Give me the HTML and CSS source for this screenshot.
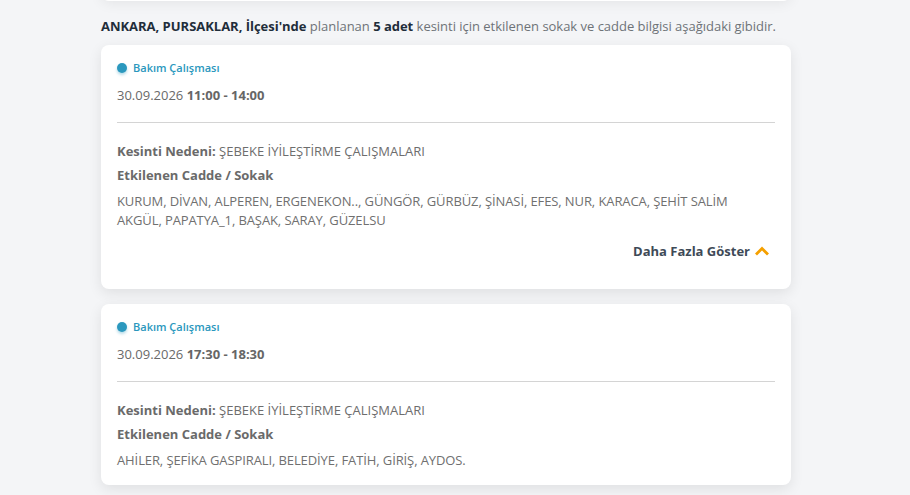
FILE: index.html
```html
<!DOCTYPE html>
<html lang="tr">
<head>
<meta charset="utf-8">
<link rel="stylesheet" href="styles.css">
</head>
<body>
<div class="page">
  <div class="prev-card"></div>
  <p class="summary"><b>ANKARA, PURSAKLAR, İlçesi'nde</b> planlanan <b>5 adet</b> kesinti için etkilenen sokak ve cadde bilgisi aşağıdaki gibidir.</p>

  <div class="card">
    <div class="tag"><span class="dot"></span>Bakım Çalışması</div>
    <div class="date">30.09.2026 <b>11:00 - 14:00</b></div>
    <hr class="divider">
    <div class="row"><b>Kesinti Nedeni:</b> ŞEBEKE İYİLEŞTİRME ÇALIŞMALARI</div>
    <div class="row"><b>Etkilenen Cadde / Sokak</b></div>
    <div class="streets">KURUM, DİVAN, ALPEREN, ERGENEKON.., GÜNGÖR, GÜRBÜZ, ŞİNASİ, EFES, NUR, KARACA, ŞEHİT SALİM AKGÜL, PAPATYA_1, BAŞAK, SARAY, GÜZELSU</div>
    <div class="more">Daha Fazla Göster
      <svg class="chev" width="16" height="10" viewBox="0 0 16 10"><path d="M2 8.5 L8 2.5 L14 8.5" fill="none" stroke="#f5a000" stroke-width="2.8"/></svg>
    </div>
  </div>

  <div class="card card-last">
    <div class="tag"><span class="dot"></span>Bakım Çalışması</div>
    <div class="date">30.09.2026 <b>17:30 - 18:30</b></div>
    <hr class="divider">
    <div class="row"><b>Kesinti Nedeni:</b> ŞEBEKE İYİLEŞTİRME ÇALIŞMALARI</div>
    <div class="row"><b>Etkilenen Cadde / Sokak</b></div>
    <div class="streets">AHİLER, ŞEFİKA GASPIRALI, BELEDİYE, FATİH, GİRİŞ, AYDOS.</div>
  </div>
</div>
</body>
</html>
```

FILE: styles.css
```css
html, body {
  margin: 0;
  padding: 0;
  background: #f4f5f7;
  height: 495px;
  overflow: hidden;
}
.page {
  width: 690px;
  margin-left: 101px;
  font-family: "Open Sans", sans-serif;
  color: #6d6d6d;
  margin-top: -20px;
}
.prev-card {
  height: 21px;
  background: #fff;
  border-radius: 0 0 8px 8px;
  box-shadow: 0 2px 14px rgba(0,0,0,0.07);
}
.summary {
  margin: 0;
  padding: 16px 0 0;
  height: 28px;
  font-size: 13px;
  color: #6e7377;
  line-height: 18px;
  letter-spacing: -0.02px;
}
.summary b { color: #1f2d3a; }
.card {
  background: #fff;
  border-radius: 8px;
  box-shadow: 0 4px 14px rgba(0,0,0,0.09);
  padding: 14px 16px 0;
  margin-bottom: 15px;
}
.tag {
  display: flex;
  align-items: center;
  font-size: 11px;
  color: #2a97bd;
  height: 17px;
  font-weight: 600;
}
.dot {
  width: 10px;
  height: 10px;
  border-radius: 50%;
  background: #2b98be;
  margin-right: 6px;
  box-shadow: 0 2px 3px rgba(43,152,190,0.35);
}
.date {
  margin-top: 10px;
  font-size: 13px;
  line-height: 18px;
  color: #6a6a6a;
}
.date b { color: #666; }
.divider {
  border: 0;
  border-top: 1px solid #d4d4d4;
  margin: 18px 0 19px;
}
.row {
  font-size: 13px;
  line-height: 18px;
  margin-bottom: 6px;
  color: #6d6d6d;
}
.row b { color: #6a6a6a; }
.streets {
  font-size: 13px;
  line-height: 19px;
  margin-top: 8px;
  padding-bottom: 14px;
  color: #707070;
  letter-spacing: -0.1px;
}
.card-last .streets { padding-bottom: 15px; }
.more {
  display: flex;
  justify-content: flex-end;
  align-items: center;
  gap: 4px;
  font-size: 13px;
  font-weight: 700;
  color: #3e4a57;
  margin-top: -2px;
  padding-right: 5px;
  height: 18px;
  padding-bottom: 29px;
}
.chev { display: block; }
```
